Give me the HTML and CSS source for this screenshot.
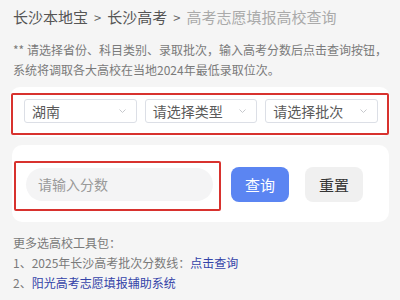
FILE: index.html
```html
<!DOCTYPE html>
<html lang="zh">
<head>
<meta charset="utf-8">
<link rel="stylesheet" href="styles.css">
</head>
<body>
<div class="crumb"><span class="c-dark">长沙本地宝</span><span class="sep">&gt;</span><span class="c-dark">长沙高考</span><span class="sep">&gt;</span><span class="c-light">高考志愿填报高校查询</span></div>
<div class="note">** 请选择省份、科目类别、录取批次，输入高考分数后点击查询按钮，<br>系统将调取各大高校在当地2024年最低录取位次。</div>
<div class="card card-sel">
  <div class="mark mark-sel">
    <div class="sel"><span>湖南</span><svg class="chev" width="7" height="4" viewBox="0 0 7 4"><path d="M0.5 0.5 L3.5 3.5 L6.5 0.5" fill="none" stroke="#c6c8cc" stroke-width="1"/></svg></div>
    <div class="sel"><span>请选择类型</span><svg class="chev" width="7" height="4" viewBox="0 0 7 4"><path d="M0.5 0.5 L3.5 3.5 L6.5 0.5" fill="none" stroke="#c6c8cc" stroke-width="1"/></svg></div>
    <div class="sel"><span>请选择批次</span><svg class="chev" width="7" height="4" viewBox="0 0 7 4"><path d="M0.5 0.5 L3.5 3.5 L6.5 0.5" fill="none" stroke="#c6c8cc" stroke-width="1"/></svg></div>
  </div>
</div>
<div class="card card-in">
  <div class="mark mark-in"><div class="score">请输入分数</div></div>
  <div class="btn btn-q">查询</div>
  <div class="btn btn-r">重置</div>
</div>
<div class="more">
  <div>更多选高校工具包：</div>
  <div>1、2025年长沙高考批次分数线：<span class="link">点击查询</span></div>
  <div>2、<span class="link">阳光高考志愿填报辅助系统</span></div>
</div>
</body>
</html>
```
FILE: styles.css
```css
body {
  margin: 0;
  background: #f5f5f5;
  font-family: "Noto Sans CJK SC", "Noto Sans", sans-serif;
  color: #666;
}
.crumb {
  padding: 6px 0 0 13px;
  font-size: 15px;
  line-height: 22px;
  height: 22px;
  white-space: nowrap;
}
.c-dark { color: #555; }
.c-light { color: #aaa; }
.sep {
  color: #666;
  font-size: 13px;
  margin: 0 6px;
}
.note {
  margin-top: 12px;
  padding-left: 13px;
  font-size: 12px;
  line-height: 20px;
  color: #7a7a7a;
  white-space: nowrap;
}
.card {
  background: #fff;
  border-radius: 10px;
}
.card-sel {
  margin: 7px 10px 0 10px;
  padding: 6px 1px 2px 1px;
}
.mark {
  border: 2px solid #d8322e;
  border-radius: 2px;
}
.mark-sel {
  display: flex;
  gap: 8px;
  padding: 4px 9px 10px 11px;
}
.sel {
  flex: 1;
  height: 22px;
  border: 1px solid #dcdfe6;
  border-radius: 3px;
  display: flex;
  align-items: center;
  justify-content: space-between;
  padding: 0 10px 0 7px;
  font-size: 14px;
  color: #5a5a5a;
}
.chev { display: block; }
.card-in {
  margin: 8px 11px 0 12px;
  padding: 16px 0 11px 2px;
  display: flex;
  align-items: flex-start;
}
.mark-in {
  padding: 5px 6px 0 10px;
  width: 187px;
  height: 41px;
}
.score {
  height: 33px;
  border-radius: 17px;
  background: #f4f4f5;
  font-size: 14px;
  line-height: 33px;
  padding-left: 12px;
  color: #999;
}
.btn {
  margin-top: 6px;
  height: 35px;
  width: 58px;
  border-radius: 8px;
  font-size: 15px;
  line-height: 35px;
  text-align: center;
}
.btn-q {
  margin-left: 10px;
  background: #5b85f2;
  color: #fff;
}
.btn-r {
  margin-left: 16px;
  background: #f0f0f0;
  color: #333;
}
.more {
  margin-top: 11px;
  padding-left: 13px;
  font-size: 12px;
  line-height: 20px;
  color: #7a7a7a;
}
.link { color: #3343a8; }
```
